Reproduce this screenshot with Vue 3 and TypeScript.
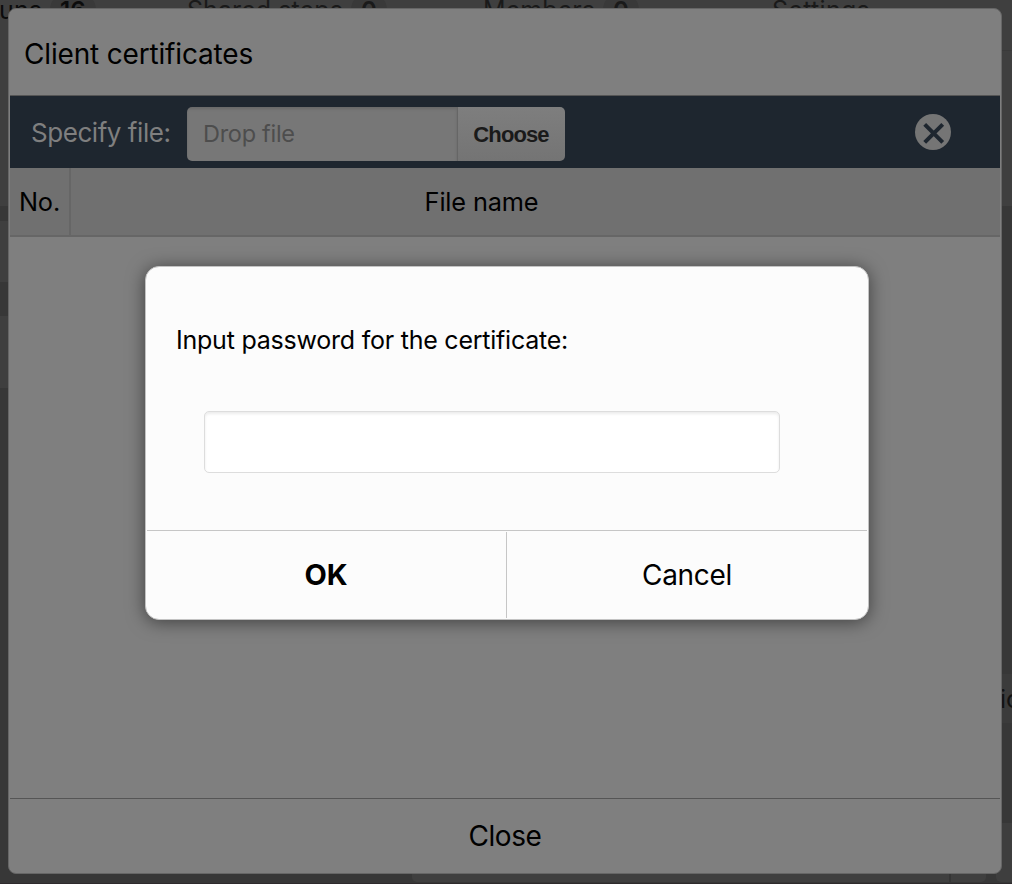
<script setup lang="ts">
import { ref } from 'vue'

interface Tab { name: string; count?: string; cls: string }
const tabs: Tab[] = [
  { name: 'Test runs', count: '16', cls: 'tab-runs' },
  { name: 'Shared steps', count: '0', cls: 'tab-shared' },
  { name: 'Members', count: '0', cls: 'tab-members' },
  { name: 'Settings', cls: 'tab-settings' },
]
const leftBands = ['a', 'b', 'c', 'd', 'e', 'f']
const rightBands = ['a', 'b', 'c', 'd', 'e', 'f']
const password = ref('')
</script>

<template>
  <div class="screen">
    <div class="page">
      <div class="strip strip-left"><i v-for="b in leftBands" :key="b" :class="b"></i></div>
      <div class="strip strip-right"><i v-for="b in rightBands" :key="b" :class="b"></i></div>
      <div class="tabs">
        <div v-for="t in tabs" :key="t.name" class="tab" :class="t.cls">
          <span class="tab-name">{{ t.name }}</span><span v-if="t.count" class="badge">{{ t.count }}</span>
        </div>
      </div>
      <span class="action">ic</span>
      <div class="bottom-card"></div>
    </div>

    <section class="dialog">
      <header class="title"><span>Client certificates</span></header>
      <div class="toolbar">
        <span class="specify">Specify file:</span>
        <div class="file">
          <div class="drop"><span>Drop file</span></div>
          <div class="choose"><span>Choose</span></div>
        </div>
        <svg class="clear" viewBox="0 0 36 36" width="36" height="36">
          <circle cx="18" cy="18" r="18" fill="#757575" />
          <path d="M9.7 10.3 27.7 28.3M27.7 10.3 9.7 28.3" stroke="#1e262f" stroke-width="4" fill="none" />
        </svg>
      </div>
      <div class="thead">
        <div class="no"><span>No.</span></div>
        <div class="name"><span>File name</span></div>
      </div>
      <div class="tbody"></div>
      <footer class="close"><span>Close</span></footer>
    </section>

    <section class="prompt">
      <div class="prompt-body">
        <label><span>Input password for the certificate:</span></label>
        <input v-model="password" type="password" />
      </div>
      <div class="actions">
        <div class="ok"><span>OK</span></div>
        <div class="cancel"><span>Cancel</span></div>
      </div>
    </section>
  </div>
</template>

<style>
html, body { margin: 0; overflow: hidden; }
</style>

<style scoped>
* { box-sizing: border-box; }
.screen {
  position: relative; width: 1012px; height: 884px; overflow: hidden;
  display: flex; padding: 8px; background: #373737;
  font-family: Inter, "Liberation Sans", sans-serif; color: #000; white-space: nowrap;
}
.page { position: absolute; inset: 0; color: #1a1a1a; border-bottom: 1px solid #2e2a2c; }
.strip { position: absolute; top: 0; display: flex; flex-direction: column; height: 883px; }
.strip i { flex: none; }
.strip-left { left: 0; width: 996px; }
.strip-right { right: 0; width: 16px; }
.a, .c, .e { background: #3f3f3f; }
.strip-left .a { height: 206px; }
.strip-left .b { height: 15px; }
.strip-left .c { height: 61px; }
.strip-left .d { height: 34px; }
.strip-left .e { height: 72px; }
.strip-right .a { height: 51px; border-bottom: 1px solid #3a3a3a; }
.strip-right .b { height: 155px; background: #3f3f3f; }
.strip-right .c { height: 468px; background: #373737; }
.strip-right .d { height: 49px; background: #3b3b3b; }
.strip-right .e { height: 100px; background: #373737; }
.strip-right .f { height: 59px; background: #3e3e3e; border-radius: 0 0 0 5px; }
.tab { position: absolute; top: -5px; height: 30px; display: flex; align-items: center; font-size: 25px; line-height: 30px; letter-spacing: .08px; }
.tab-runs { left: -68px; color: #0c0c0c; }
.tab-shared { left: 187px; }
.tab-members { left: 483px; }
.tab-settings { left: 772px; letter-spacing: .3px; }
.badge { margin-left: 8px; padding: 0 10px; height: 36px; line-height: 38px; border-radius: 18px; background: #393939; font-size: 24px; font-weight: 600; }
.action { position: absolute; left: 1000px; top: 684px; font-size: 25px; line-height: 30px; color: #121212; }
.bottom-card { position: absolute; left: 412px; top: 860px; width: 574px; height: 22px; background: linear-gradient(90deg, transparent 537px, #353535 537px, #353535 539px, transparent 539px) #3f3f3f; border-radius: 0 0 5px 5px; }

.dialog {
  position: relative; width: 994px; height: 866px; padding: 1px; border: 1px solid #666;
  border-radius: 8px; background: #7f7f7f; display: flex; flex-direction: column;
}
.title { height: 86px; padding: 3px 0 0 14px; border-bottom: 1px solid #555; display: flex; align-items: center; font-size: 28px; letter-spacing: -.17px; }
.toolbar { height: 72px; background: #1e262f; display: flex; align-items: center; padding-left: 21px; color: #7f7f7f; }
.specify { width: 156px; padding-bottom: 0; font-size: 26px; letter-spacing: -.45px; }
.file { display: flex; width: 378px; height: 54px; margin-top: 4px; border-radius: 5px; overflow: hidden; }
.drop { width: 270px; background: #777; display: flex; align-items: center; padding: 0 0 1px 16px; color: #4d4d4d; font-size: 23.5px; letter-spacing: -.28px; box-shadow: inset 0 2px 3px rgba(0,0,0,.12); }
.choose { flex: 1; border-left: 1px solid #666; background: linear-gradient(#7e7e7e, #747474); display: flex; align-items: center; justify-content: center; color: #1a1a1a; font: bold 22px "Liberation Sans", sans-serif; letter-spacing: -.9px; padding: 1px 1px 0 0; }
.clear { margin-left: 350px; }
.thead { height: 69px; background: #707070; border-bottom: 2px solid #666; display: flex; font-size: 25.3px; letter-spacing: -.15px; }
.thead div { display: flex; align-items: center; justify-content: center; }
.no { width: 61px; border-right: 2px solid #666; }
.name { width: 821px; }
.tbody { flex: 1; }
.close { height: 74px; border-top: 1px solid #555; display: flex; align-items: center; justify-content: center; font-size: 28px; letter-spacing: -.4px; }

.prompt {
  position: absolute; left: 145px; top: 266px; width: 724px; height: 354px; padding: 1px;
  border: 1px solid #c3c3c3; border-radius: 14px; background: #fcfcfc;
  box-shadow: 0 2px 18px rgba(0,0,0,.5); display: flex; flex-direction: column;
}
.prompt-body { height: 262px; padding: 57px 0 0 29px; display: flex; flex-direction: column; }
label { font-size: 25px; line-height: 30px; letter-spacing: -.23px; }
input { width: 576px; height: 62px; margin: 56px 0 0 28px; border: 1px solid #ddd; border-radius: 5px; background: #fff; box-shadow: inset 0 2px 3px rgba(0,0,0,.08); outline: none; }
.actions { flex: 1; border-top: 1px solid #c6c6c6; display: flex; font-size: 28px; padding-top: 1px; }
.actions div { display: flex; align-items: center; justify-content: center; }
.actions .ok { width: 360px; padding: 0 1px 2px 0; border-right: 1px solid #c6c6c6; font-weight: bold; font-size: 29px; }
.cancel { flex: 1; letter-spacing: -.3px; }
</style>
